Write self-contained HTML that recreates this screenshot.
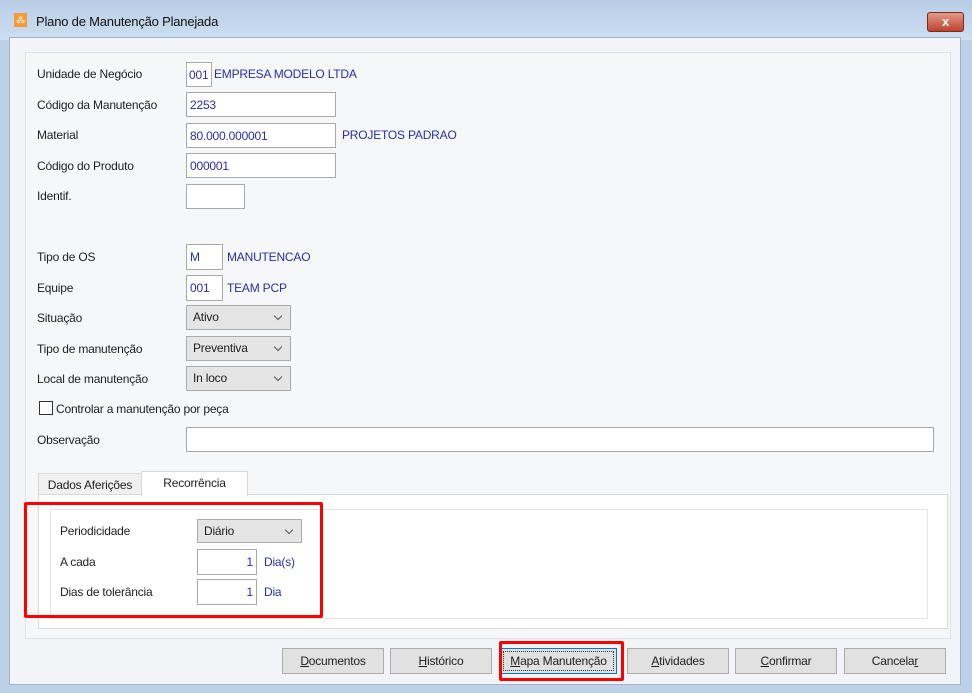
<!DOCTYPE html><html><head><style>
body{margin:0;width:972px;height:693px;overflow:hidden;background:#bcd0e6;font-family:"Liberation Sans",sans-serif;font-size:12px;letter-spacing:-0.2px;color:#1e1e1e;position:relative}
.a{position:absolute;white-space:nowrap}
.in{position:absolute;background:#fff;border:1px solid #a9a9a9;box-sizing:border-box;color:#2c2ca8;padding:0 0 0 3px;line-height:24px}
.bl{position:absolute;color:#2c2ca8;white-space:nowrap}
.cb{position:absolute;background:#e5e5e5;border:1px solid #acacac;box-sizing:border-box;padding-left:6px;line-height:23px}
.cb:after{content:"";position:absolute;right:9px;top:7px;width:5px;height:5px;border-right:1px solid #555;border-bottom:1px solid #555;transform:rotate(45deg)}
.bt{position:absolute;top:648px;height:26px;width:102px;background:#e1e1e1;border:1px solid #adadad;box-sizing:border-box;text-align:center;line-height:24px}
</style></head><body>
<div class="a" style="left:0;top:0;width:972px;height:40px;background:linear-gradient(#b8cde6,#cddff1)"></div>
<div class="a" style="left:14px;top:13px;width:13px;height:14px;background:#f39b3b;color:#fff;font-size:9px;line-height:14px;text-align:center">⁂</div>
<div class="a" style="left:36px;top:14px;font-size:13px;color:#111">Plano de Manutenção Planejada</div>
<div class="a" style="left:927px;top:12px;width:37px;height:20px;background:linear-gradient(#e39a8a,#c0432c);border:1px solid #7a2a1e;border-radius:3px;box-sizing:border-box;color:#fff;text-align:center;font-weight:bold;line-height:18px;font-size:13px">x</div>
<div class="a" style="left:9px;top:37px;width:952px;height:648px;background:#f2f4f7;border:1px solid #9fb3cc;box-sizing:border-box"></div>
<div class="a" style="left:25px;top:52px;width:926px;height:587px;background:#f6f7f9;border:1px solid #dfe2e6;box-sizing:border-box"></div>

<div class="a" style="left:37px;top:67px">Unidade de Negócio</div>
<div class="in" style="left:186px;top:62px;width:26px;height:25px;padding:0 0 0 2px">001</div>
<div class="bl" style="left:214px;top:67px">EMPRESA MODELO LTDA</div>
<div class="a" style="left:37px;top:98px">Código da Manutenção</div>
<div class="in" style="left:186px;top:92px;width:150px;height:25px">2253</div>
<div class="a" style="left:37px;top:128px">Material</div>
<div class="in" style="left:186px;top:123px;width:150px;height:25px">80.000.000001</div>
<div class="bl" style="left:342px;top:128px">PROJETOS PADRAO</div>
<div class="a" style="left:37px;top:159px">Código do Produto</div>
<div class="in" style="left:186px;top:153px;width:150px;height:25px">000001</div>
<div class="a" style="left:37px;top:189px">Identif.</div>
<div class="in" style="left:186px;top:184px;width:59px;height:25px"></div>

<div class="a" style="left:37px;top:250px">Tipo de OS</div>
<div class="in" style="left:186px;top:244px;width:37px;height:26px">M</div>
<div class="bl" style="left:227px;top:250px">MANUTENCAO</div>
<div class="a" style="left:37px;top:281px">Equipe</div>
<div class="in" style="left:186px;top:275px;width:37px;height:26px">001</div>
<div class="bl" style="left:227px;top:281px">TEAM PCP</div>
<div class="a" style="left:37px;top:311px">Situação</div>
<div class="cb" style="left:186px;top:305px;width:105px;height:25px">Ativo</div>
<div class="a" style="left:37px;top:342px">Tipo de manutenção</div>
<div class="cb" style="left:186px;top:336px;width:105px;height:25px">Preventiva</div>
<div class="a" style="left:37px;top:372px">Local de manutenção</div>
<div class="cb" style="left:186px;top:366px;width:105px;height:25px">In loco</div>
<div class="a" style="left:39px;top:401px;width:14px;height:14px;border:1px solid #333;background:#fff;box-sizing:border-box"></div>
<div class="a" style="left:56px;top:402px">Controlar a manutenção por peça</div>
<div class="a" style="left:37px;top:433px">Observação</div>
<div class="in" style="left:186px;top:427px;width:748px;height:25px"></div>

<div class="a" style="left:38px;top:494px;width:910px;height:135px;background:#fff;border:1px solid #d9d9d9;box-sizing:border-box"></div>
<div class="a" style="left:38px;top:473px;width:104px;height:22px;background:#f0f0f0;border:1px solid #d9d9d9;box-sizing:border-box;line-height:22px;text-align:center">Dados Aferições</div>
<div class="a" style="left:141px;top:471px;width:107px;height:25px;background:#fff;border:1px solid #d9d9d9;border-bottom:none;box-sizing:border-box;line-height:22px;text-align:center">Recorrência</div>
<div class="a" style="left:50px;top:509px;width:878px;height:110px;background:#fff;border:1px solid #e3e3e3;box-sizing:border-box"></div>
<div class="a" style="left:60px;top:524px">Periodicidade</div>
<div class="cb" style="left:197px;top:519px;width:105px;height:24px">Diário</div>
<div class="a" style="left:60px;top:555px">A cada</div>
<div class="in" style="left:197px;top:549px;width:60px;height:26px;text-align:right;padding-right:3px">1</div>
<div class="bl" style="left:264px;top:555px">Dia(s)</div>
<div class="a" style="left:60px;top:585px">Dias de tolerância</div>
<div class="in" style="left:197px;top:579px;width:60px;height:26px;text-align:right;padding-right:3px">1</div>
<div class="bl" style="left:264px;top:585px">Dia</div>
<div class="a" style="left:24px;top:502px;width:299px;height:116px;border:3px solid #f00;border-radius:2px;box-sizing:border-box"></div>

<div class="bt" style="left:282px"><u>D</u>ocumentos</div>
<div class="bt" style="left:390px"><u>H</u>istórico</div>
<div class="bt" style="left:500px;width:117px;border:1px solid #0078d7;outline:1px dotted #333;outline-offset:-4px"><u>M</u>apa Manutenção</div>
<div class="a" style="left:499px;top:641px;width:125px;height:40px;border:3px solid #f00;border-radius:2px;box-sizing:border-box"></div>
<div class="bt" style="left:627px"><u>A</u>tividades</div>
<div class="bt" style="left:735px"><u>C</u>onfirmar</div>
<div class="bt" style="left:844px">Cancela<u>r</u></div>
</body></html>
